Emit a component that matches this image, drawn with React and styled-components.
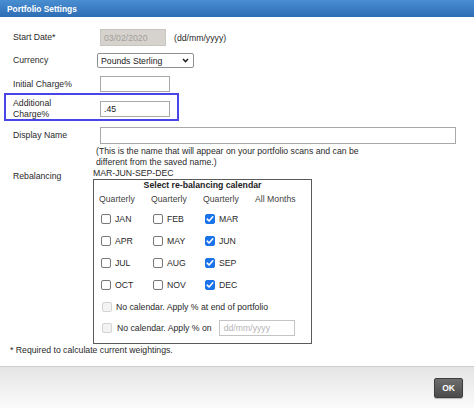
import React from "react";
import styled, { createGlobalStyle } from "styled-components";

const Global = createGlobalStyle`
  html, body { margin: 0; padding: 0; background: #fff; }
  body { font-family: "Liberation Sans", Arial, sans-serif; font-size: 8.7px; color: #2a2a2a; }
  * { box-sizing: border-box; }
`;

const Dialog = styled.div`
  width: 474px;
  height: 408px;
  display: flex;
  flex-direction: column;
  background: #fff;
`;

const TitleBar = styled.div`
  height: 17px;
  flex: none;
  display: flex;
  align-items: center;
  padding-left: 7px;
  background: linear-gradient(#4a8ed2, #2d6db3);
  color: #fff;
  font-weight: bold;
  font-size: 8.4px;
`;

const Content = styled.div`
  flex: 1;
  display: flex;
  flex-direction: column;
  padding: 12px 0 0 13px;
`;

const Row = styled.div`
  display: flex;
  align-items: ${(p) => p.$align || "center"};
  margin-top: ${(p) => p.$mt || 0}px;
  height: ${(p) => (p.$h ? `${p.$h}px` : "auto")};
`;

const Label = styled.div`
  width: 87px;
  flex: none;
  line-height: 11px;
  color: #2a2a2a;
  padding-top: ${(p) => p.$pt || 0}px;
`;

const Highlight = styled.div`
  display: flex;
  align-items: flex-start;
  width: 175px;
  height: 28px;
  margin: 1px 0 0 -9px;
  padding: 3px 0 0 7px;
  border: 2px solid #4a45e6;
`;

const TextInput = styled.div`
  width: ${(p) => p.$w}px;
  height: ${(p) => p.$h || 17}px;
  margin-top: ${(p) => p.$mt || 0}px;
  border: 1px solid ${(p) => (p.$disabled ? "#c9c5bf" : "#a9a9a9")};
  background: ${(p) => (p.$disabled ? "#d6d3ce" : "#fff")};
  color: ${(p) => (p.$disabled ? "#a29e99" : "#222")};
  display: flex;
  align-items: center;
  padding-left: 3px;
  flex: none;
`;

const Hint = styled.span`
  margin-left: 8px;
`;

const SelectBox = styled.div`
  width: 97px;
  height: 15px;
  margin-left: -3px;
  border: 1px solid #8f8f8f;
  border-radius: 2px;
  display: flex;
  align-items: center;
  justify-content: space-between;
  padding: 0 4px 0 3px;
  color: #222;
`;

const Note = styled.div`
  margin: 2px 0 0 83px;
  line-height: 11px;
`;

const Field = styled.div`
  display: flex;
  flex-direction: column;
  margin-left: -7px;
`;

const Summary = styled.div`
  line-height: 9px;
  margin-top: 1px;
`;

const CalBox = styled.div`
  width: 219px;
  height: 165px;
  margin-top: 1px;
  border: 1px solid #5a5a5a;
  padding: 0 0 0 5px;
  display: flex;
  flex-direction: column;
`;

const CalTitle = styled.div`
  font-weight: bold;
  text-align: center;
  line-height: 10px;
  color: #222;
  margin-left: -5px;
`;

const HeadRow = styled.div`
  display: grid;
  grid-template-columns: repeat(4, 52px);
  margin-top: 4px;
`;

const Head = styled.div`
  line-height: 10px;
  height: 10px;
  color: #444;
`;

const Grid = styled.div`
  display: grid;
  grid-template-columns: repeat(4, 52px);
  grid-auto-rows: 22px;
  margin-top: 4px;
`;

const Cell = styled.div`
  display: flex;
  align-items: center;
  gap: 4px;
  padding-left: 2px;
`;

const Box = styled.span`
  width: 10px;
  height: 10px;
  flex: none;
  border-radius: 2px;
  border: 1px solid
    ${(p) => (p.$checked ? "#1a73e8" : p.$disabled ? "#d3d3d3" : "#777")};
  background: ${(p) =>
    p.$checked ? "#1a73e8" : p.$disabled ? "#f3f3f3" : "#fff"};
  display: inline-flex;
  align-items: center;
  justify-content: center;
`;

const Option = styled.div`
  display: flex;
  align-items: center;
  height: 21px;
  padding-left: 3px;
`;

const OptText = styled.span`
  margin-left: ${(p) => p.$ml || 4}px;
`;

const DateSmall = styled.div`
  width: 76px;
  height: 16px;
  margin-left: 7px;
  border: 1px solid #c4c4c4;
  color: #b4b4b4;
  display: flex;
  align-items: center;
  padding-left: 4px;
`;

const Footnote = styled.div`
  margin: 1px 0 0 -3px;
  line-height: 10px;
`;

const Footer = styled.div`
  height: 42px;
  flex: none;
  border-top: 1px solid #cfcfcf;
  background: linear-gradient(#e4e4e4, #fbfbfb);
  display: flex;
  justify-content: flex-end;
  align-items: flex-start;
  padding: 11px 11px 0 0;
`;

const OkButton = styled.div`
  width: 29px;
  height: 20px;
  border: 1px solid #3e3e3e;
  border-radius: 2px;
  background: linear-gradient(#6d6d6d, #4b4b4b);
  color: #fff;
  font-weight: bold;
  font-size: 8.5px;
  display: flex;
  align-items: center;
  justify-content: center;
  box-shadow: 0 1px 1px rgba(0, 0, 0, 0.25);
`;

const Checkbox = ({ checked, disabled }) => (
  <Box $checked={checked} $disabled={disabled}>
    {checked && (
      <svg width="8" height="8" viewBox="0 0 8 8">
        <polyline
          points="1.2,4.2 3.1,6 6.8,1.8"
          fill="none"
          stroke="#fff"
          strokeWidth="1.6"
          strokeLinecap="round"
          strokeLinejoin="round"
        />
      </svg>
    )}
  </Box>
);

const months = [
  ["JAN", "FEB", "MAR"],
  ["APR", "MAY", "JUN"],
  ["JUL", "AUG", "SEP"],
  ["OCT", "NOV", "DEC"],
];

export default function App() {
  return (
    <>
      <Global />
      <Dialog>
        <TitleBar>Portfolio Settings</TitleBar>
        <Content>
          <Row $h={17}>
            <Label>Start Date*</Label>
            <TextInput $w={66} $disabled>03/02/2020</TextInput>
            <Hint>(dd/mm/yyyy)</Hint>
          </Row>
          <Row $h={15} $mt={7}>
            <Label>Currency</Label>
            <SelectBox>
              <span>Pounds Sterling</span>
              <svg width="7" height="5" viewBox="0 0 7 5">
                <polyline
                  points="1,1 3.5,3.6 6,1"
                  fill="none"
                  stroke="#222"
                  strokeWidth="1.5"
                />
              </svg>
            </SelectBox>
          </Row>
          <Row $h={16} $mt={8}>
            <Label>Initial Charge%</Label>
            <TextInput $w={70} $h={16} />
          </Row>
          <Highlight>
            <Label>
              Additional
              <br />
              Charge%
            </Label>
            <TextInput $w={70} $h={16} $mt={3}>
              .45
            </TextInput>
          </Highlight>
          <Row $h={17} $mt={6}>
            <Label>Display Name</Label>
            <TextInput $w={356} />
          </Row>
          <Note>
            (This is the name that will appear on your portfolio scans and can be
            <br />
            different from the saved name.)
          </Note>
          <Row $align="flex-start">
            <Label $pt={3}>Rebalancing</Label>
            <Field>
              <Summary>MAR-JUN-SEP-DEC</Summary>
              <CalBox>
                <CalTitle>Select re-balancing calendar</CalTitle>
                <HeadRow>
                  <Head>Quarterly</Head>
                  <Head>Quarterly</Head>
                  <Head>Quarterly</Head>
                  <Head>All Months</Head>
                </HeadRow>
                <Grid>
                  {months.map((row) =>
                    row
                      .map((m, i) => (
                        <Cell key={m}>
                          <Checkbox checked={i === 2} />
                          <span>{m}</span>
                        </Cell>
                      ))
                      .concat(<div key={row[0] + "x"} />)
                  )}
                </Grid>
                <Option>
                  <Checkbox disabled />
                  <OptText>No calendar. Apply % at end of portfolio</OptText>
                </Option>
                <Option>
                  <Checkbox disabled />
                  <OptText $ml={5}>No calendar. Apply % on</OptText>
                  <DateSmall>dd/mm/yyyy</DateSmall>
                </Option>
              </CalBox>
            </Field>
          </Row>
          <Footnote>* Required to calculate current weightings.</Footnote>
        </Content>
        <Footer>
          <OkButton>OK</OkButton>
        </Footer>
      </Dialog>
    </>
  );
}
